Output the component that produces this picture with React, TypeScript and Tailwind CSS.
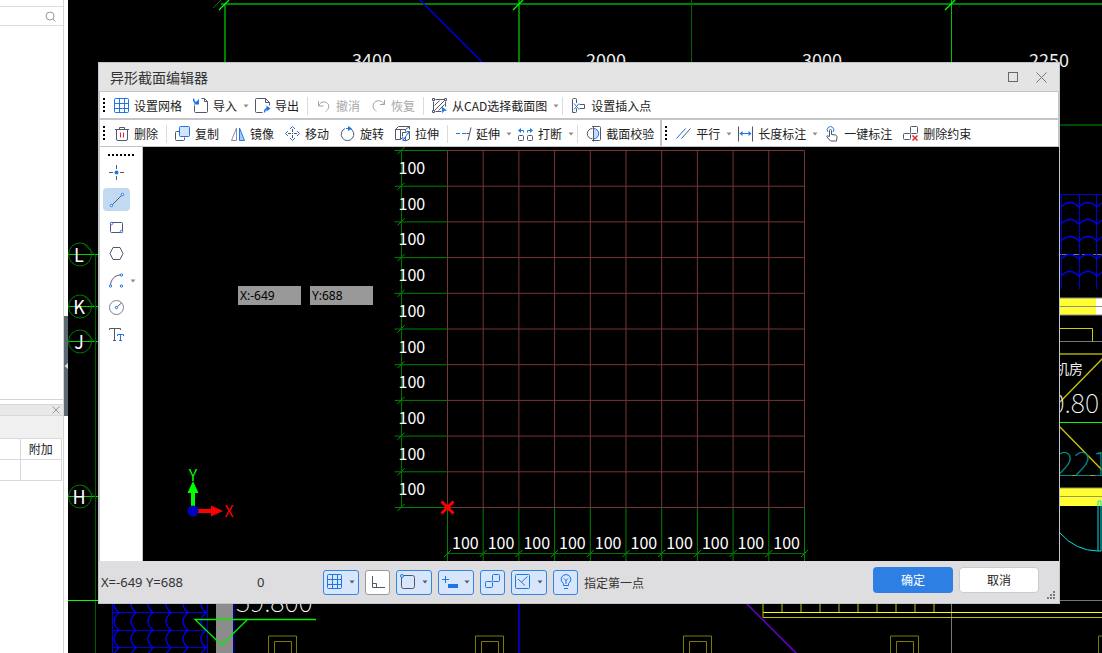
import React from "react";

type IconProps = {
  children: React.ReactNode;
  size?: number;
};

type ToolItem = {
  label: string;
  icon: React.ReactNode;
  menu?: boolean;
  disabled?: boolean;
  separated?: boolean;
};

const BLUE = "#1f74e8";
const DARK = "#50586c";
const CELL = 35.7;
const STEPS = [0, 1, 2, 3, 4, 5, 6, 7, 8, 9, 10];

const Icon: React.FC<IconProps> = ({ children, size = 16 }) => (
  <svg width={size} height={size} viewBox="0 0 16 16" fill="none" stroke={DARK} className="shrink-0">
    {children}
  </svg>
);

const Caret: React.FC<{ color?: string }> = ({ color = "#8c8c8c" }) => (
  <svg width="6" height="4" viewBox="0 0 6 4" className="shrink-0">
    <path d="M0.5 0.5h5L3 3.5z" fill={color} />
  </svg>
);

const GridIcon = () => (
  <Icon>
    <rect x="0.5" y="0.5" width="14" height="14" rx="1" stroke={BLUE} />
    <path d="M5.5 0.5v14M10.5 0.5v14M0.5 5.5h14M0.5 10.5h14" stroke={BLUE} />
  </Icon>
);

const TwoBoxes: React.FC<{ color?: string }> = ({ color = DARK }) => (
  <>
    <rect x="7.5" y="0.5" width="7" height="7" rx="1" stroke={color} />
    <rect x="0.5" y="7.5" width="7" height="6" rx="1" stroke={color} />
  </>
);

const fileTools: ToolItem[] = [
  { label: "设置网格", icon: <GridIcon /> },
  {
    label: "导入",
    menu: true,
    icon: (
      <Icon>
        <path d="M8.5 0.5h3l3 3v10a1 1 0 0 1-1 1h-11a1 1 0 0 1-1-1v-6M11.5 0.5v3h3" />
        <path d="M0.5 0.5c0 3 1 4.5 4 4.5" stroke={BLUE} strokeWidth="1.5" />
        <path d="M6 1v5.5H0.5z" fill={BLUE} stroke="none" />
      </Icon>
    ),
  },
  {
    label: "导出",
    separated: true,
    icon: (
      <Icon>
        <path d="M7.5 14.5h-6a1 1 0 0 1-1-1v-12a1 1 0 0 1 1-1h9l4 4v3M10.5 0.5v4h4" />
        <path d="M9.5 14.5c0-3 1-4 3.5-4" stroke={BLUE} strokeWidth="1.5" />
        <path d="M11.5 7.5l4 3-4 3z" fill={BLUE} stroke="none" />
      </Icon>
    ),
  },
  {
    label: "撤消",
    disabled: true,
    icon: (
      <Icon>
        <path
          d="M2.5 3v5H7.5M2.5 8c1-3 3.500-4.500 6.500-4 4 1 4.500 4.500 3 7-.5 1-1 1.500-2.500 2.500"
          stroke="#a3a3a3"
        />
      </Icon>
    ),
  },
  {
    label: "恢复",
    disabled: true,
    separated: true,
    icon: (
      <Icon>
        <path
          d="M13.5 2v4.500h-4.500M13 6.500c-1.500-3-4-4.500-7-3.500-3.500 1-4.500 4.500-3.500 7 .5 1.500 1.500 2.500 3 3"
          stroke="#a3a3a3"
        />
      </Icon>
    ),
  },
  {
    label: "从CAD选择截面图",
    menu: true,
    separated: true,
    icon: (
      <Icon>
        <path d="M3.5 1.5h9M1.5 3.5v9M13.5 3.5v5M3.5 13.5h6" />
        <path d="M0.5 0.5h2v2h-2zM12.5 0.5h2v2h-2zM0.5 12.5h2v2h-2z" />
        <path d="M2.5 7.5l5-5M2.5 12.5l10-10M6.5 12.5l6-6" />
        <path d="M9.5 8.5l5.5 4-3 .5-1.5 2.5z" fill={BLUE} stroke="none" />
      </Icon>
    ),
  },
  {
    label: "设置插入点",
    icon: (
      <Icon>
        <path d="M5.5 5v-3.5a1 1 0 0 0-1-1h-2a1 1 0 0 0-1 1v13h3a1 1 0 0 0 1-1v-3M8.500 6.500h5v4h-5" />
        <path d="M3 5.500l5 6M8 5.500l-5 6" stroke={BLUE} />
      </Icon>
    ),
  },
];

const editTools: ToolItem[] = [
  {
    label: "删除",
    separated: true,
    icon: (
      <Icon>
        <path d="M1 3.5h14M5.5 3.5v-2h5v2M2.5 3.5v9.5a1.5 1.5 0 0 0 1.5 1.5h8a1.5 1.5 0 0 0 1.5-1.5v-9.5" />
        <path d="M6.5 6.5v5M9.5 6.5v5" stroke="#e0262d" />
      </Icon>
    ),
  },
  {
    label: "复制",
    icon: (
      <Icon>
        <path d="M4 5.5h-2.5a1 1 0 0 0-1 1v7a1 1 0 0 0 1 1h7a1 1 0 0 0 1-1v-2" />
        <rect x="4.5" y="0.5" width="10" height="10" rx="1" fill="#d3e4fb" stroke={BLUE} />
      </Icon>
    ),
  },
  {
    label: "镜像",
    icon: (
      <Icon>
        <path d="M6.5 2v12.5h-5z" stroke="#8b90a0" />
        <path d="M9.5 2v12.5h5z" fill="#a9cbf8" stroke={BLUE} />
      </Icon>
    ),
  },
  {
    label: "移动",
    icon: (
      <Icon>
        <path d="M7.5 3v3M7.5 9v3M3 7.5h3M9 7.5h3M7.5 7v1" />
        <path d="M5 3l2.5-2.5L10 3M5 12l2.5 2.5L10 12M3 5L0.5 7.5 3 10M12 5l2.5 2.5L12 10" stroke={BLUE} />
      </Icon>
    ),
  },
  {
    label: "旋转",
    icon: (
      <Icon>
        <path d="M10 2.5a6.3 6.3 0 1 1-5 0" />
        <path d="M6 2.5h3.5" stroke={BLUE} />
        <path d="M8 0l4 2.5L8 5z" fill={BLUE} stroke="none" />
      </Icon>
    ),
  },
  {
    label: "拉伸",
    separated: true,
    icon: (
      <Icon>
        <path d="M0.5 3.5l3-3h11v3M0.5 3.5h10l4-3M0.5 3.5v10h5v-10M10.5 3.5v2M5.5 13.5l2-2" />
        <path d="M7.5 10.5v-4h4M14.5 5v8l-4 2v-4" />
        <path d="M8 14.5l6-9M8 11.5v3h3M11.5 5.5h2.5v3" stroke={BLUE} />
      </Icon>
    ),
  },
  {
    label: "延伸",
    menu: true,
    icon: (
      <Icon>
        <path d="M0 7.5h4M6 7.5h4" stroke={BLUE} />
        <path d="M10.5 7.5h3M15 1.5l-3 13" />
      </Icon>
    ),
  },
  {
    label: "打断",
    menu: true,
    separated: true,
    icon: (
      <Icon>
        <rect x="0.5" y="9.5" width="5" height="5" rx="1" />
        <rect x="9.5" y="9.5" width="5" height="5" rx="1" />
        <path d="M1 4.5h4.5v2M14 4.5H9.5v2" stroke={BLUE} />
        <path d="M0 4.5L3 2v5zM15 4.5L12 2v5z" fill={BLUE} stroke="none" />
      </Icon>
    ),
  },
  {
    label: "截面校验",
    icon: (
      <Icon>
        <path d="M6 0.5h7.5a1 1 0 0 1 1 1v12a1 1 0 0 1-1 1H6" />
        <path d="M7.5 2.5a5.2 5.2 0 0 1 0 10.4z" fill="#c5dcfa" stroke={BLUE} />
        <path d="M6.500 2.5a5.2 5.2 0 1 0 0 10.4M7.5 0v15.5" />
      </Icon>
    ),
  },
];

const constraintTools: ToolItem[] = [
  {
    label: "平行",
    menu: true,
    icon: (
      <Icon>
        <path d="M0.5 12.5l9-10" stroke={BLUE} />
        <path d="M5.5 12.5l9-10" />
      </Icon>
    ),
  },
  {
    label: "长度标注",
    menu: true,
    icon: (
      <Icon>
        <path d="M0.5 0.5v15M14.5 0.5v15" />
        <path d="M2 7.5h11" stroke={BLUE} />
        <path d="M1.5 7.5l3-2.5v5zM13.5 7.5l-3-2.5v5z" fill={BLUE} stroke="none" />
      </Icon>
    ),
  },
  {
    label: "一键标注",
    icon: (
      <Icon>
        <path d="M4 6a3.3 3.3 0 1 1 5 0" stroke={BLUE} />
        <path d="M5.5 10.5V4.5a1 1 0 0 1 2 0v4l4 .5c1 .2 1.5 1 1.5 2l-.5 4h-6l-3.5-4c-.5-1 .5-1.5 1-1z" />
      </Icon>
    ),
  },
  {
    label: "删除约束",
    icon: (
      <Icon>
        <TwoBoxes />
        <path d="M9 9h7v7H9z" fill="#fff" stroke="none" />
        <path d="M9.5 9.5l5 5M14.5 9.5l-5 5" stroke="#e0262d" strokeWidth="1.5" />
      </Icon>
    ),
  },
];

const drawTools: ToolItem[] = [
  {
    label: "点",
    icon: (
      <Icon>
        <path d="M7.5 0v4M7.5 11v4M0 7.5h4M11 7.5h4" />
        <circle cx="7.5" cy="7.5" r="2" fill={BLUE} stroke="none" />
      </Icon>
    ),
  },
  {
    label: "直线",
    icon: (
      <Icon>
        <path d="M3 13L13 3" />
        <circle cx="2.5" cy="13.5" r="1.2" fill="#fff" stroke={BLUE} />
        <circle cx="13.5" cy="2.5" r="1.2" fill="#fff" stroke={BLUE} />
      </Icon>
    ),
  },
  {
    label: "矩形",
    icon: (
      <Icon>
        <rect x="1.5" y="3.5" width="12" height="10" rx="1" />
        <circle cx="2.5" cy="4.5" r="1.2" fill="#fff" stroke={BLUE} />
        <circle cx="12.5" cy="12.5" r="1.2" fill="#fff" stroke={BLUE} />
      </Icon>
    ),
  },
  {
    label: "多边形",
    icon: (
      <Icon>
        <path d="M4 1.5h7l3 6-3 6H4l-3-6z" />
      </Icon>
    ),
  },
  {
    label: "弧",
    menu: true,
    icon: (
      <Icon>
        <path d="M1.5 12C2 7 5 2.500 11 2" />
        <circle cx="1.5" cy="13" r="1.2" stroke={BLUE} />
        <circle cx="12.5" cy="2" r="1.2" stroke={BLUE} />
        <circle cx="12.5" cy="13" r="1.2" stroke={BLUE} />
      </Icon>
    ),
  },
  {
    label: "圆",
    icon: (
      <Icon>
        <circle cx="7.5" cy="7.5" r="7" stroke="#7b8192" />
        <path d="M8.5 6.5L12.5 3" />
        <circle cx="7.5" cy="7.5" r="1.2" stroke={BLUE} />
      </Icon>
    ),
  },
  {
    label: "文字",
    icon: (
      <Icon>
        <path d="M0.5 3V1.5h11V3M5.5 1.5v12M4 13.5h3" />
        <path d="M8.5 9V7.5h6V9M11.5 7.5v6M10 13.5h3" stroke={BLUE} />
      </Icon>
    ),
  },
];

const statusTools: ToolItem[] = [
  { label: "网格", menu: true, icon: <GridIcon /> },
  {
    label: "正交",
    disabled: true,
    icon: (
      <Icon>
        <path d="M2.5 2v11.5H15M2.5 9.5h4v4" />
      </Icon>
    ),
  },
  {
    label: "捕捉",
    menu: true,
    icon: (
      <Icon>
        <rect x="1.5" y="1.5" width="13" height="13" rx="2" />
        <circle cx="2" cy="2" r="1.5" fill="#d7e6fb" stroke={BLUE} />
      </Icon>
    ),
  },
  {
    label: "动态输入",
    menu: true,
    icon: (
      <Icon>
        <path d="M3.5 2v7M0 5.5h7" stroke={BLUE} />
        <rect x="6" y="10" width="10" height="4" fill={BLUE} stroke="none" />
      </Icon>
    ),
  },
  {
    label: "约束",
    icon: (
      <Icon>
        <TwoBoxes color={BLUE} />
      </Icon>
    ),
  },
  {
    label: "检查",
    menu: true,
    icon: (
      <Icon>
        <rect x="0.5" y="0.5" width="14" height="14" rx="1" stroke={BLUE} />
        <path d="M3 5l7 6.5M6.5 8L12.5 2.5" stroke={BLUE} />
      </Icon>
    ),
  },
  {
    label: "提示",
    icon: (
      <Icon>
        <path
          d="M5.5 11.5V9.5A4.8 4.8 0 1 1 10.5 9.5v2zM6 14.5h4M8 6v4M6 4.5L8 6.5l2-2"
          stroke={BLUE}
        />
      </Icon>
    ),
  },
];

const Grip = () => (
  <div className="mr-0.5 mb-0.5 flex w-1 shrink-0 flex-col gap-0.5" aria-hidden="true">
    <i className="size-0.5 bg-black" />
    <i className="size-0.5 bg-black" />
    <i className="size-0.5 bg-black" />
    <i className="size-0.5 bg-black" />
  </div>
);

const ToolButtons: React.FC<{ items: ToolItem[] }> = ({ items }) => (
  <>
    {items.map((item) => (
      <React.Fragment key={item.label}>
        <button
          type="button"
          disabled={item.disabled}
          className={`flex h-6 shrink-0 items-center gap-1 pl-[5px] whitespace-nowrap ${
            item.menu ? "pr-px" : "pr-1.5"
          } ${item.disabled ? "text-[#a8a8a8]" : "text-[#222]"}`}
        >
          {item.icon}
          <span>{item.label}</span>
          {item.menu && (
            <span className="pl-0.5">
              <Caret />
            </span>
          )}
        </button>
        {item.separated && <div className="mr-[3px] ml-0.5 h-[18px] w-px shrink-0 bg-[#dcdcdc]" />}
      </React.Fragment>
    ))}
  </>
);

const AxisBubble: React.FC<{ y: number; name: string }> = ({ y, name }) => (
  <g fill="none">
    <path d={`M68 ${y}h30`} stroke="#00d000" />
    <circle cx="80" cy={y} r="11.5" stroke="#007800" />
    <path d={`M83 ${y - 11}l14 13`} stroke="#006000" />
    <text x="79" y={y + 7} textAnchor="middle" fontSize="18" fill="#fff">
      {name}
    </text>
  </g>
);

/* Plan drawing that lies behind the editor window */
const Drawing = () => (
  <svg className="absolute inset-0 size-full bg-black font-['Noto_Sans_CJK_SC',sans-serif]" fill="none">
    <path d="M221 4H3000M225 4v60M519 0v64" stroke="#008000" strokeWidth="2" />
    <path d="M691.5 0v64" stroke="#006400" />
    <path d="M951.5 0v64" stroke="#00c000" />
    <path d="M219 10l10-10M513 10l10-10M945 10l10-10" stroke="#00ff00" strokeWidth="1.3" />
    <path d="M213 8l8-8" stroke="#007000" />
    <path d="M420 0l64 64" stroke="#0000ff" strokeWidth="1.3" />
    <g fontSize="18" fill="#eee">
      <text x="352" y="67">3400</text>
      <text x="586" y="67">2000</text>
      <text x="802" y="67">3000</text>
      <text x="1029" y="67">2250</text>
    </g>

    <AxisBubble y={254.5} name="L" />
    <AxisBubble y={306.5} name="K" />
    <AxisBubble y={341.5} name="J" />
    <AxisBubble y={496.5} name="H" />
    <path d="M95.5 255v1000" stroke="#006000" />
    <path d="M68 600.5h32" stroke="#00ff00" />

    <path d="M1060 125h3000" stroke="#004a00" strokeWidth="2" />
    <path d="M1060 254.5h42" stroke="#777" strokeDasharray="9 2" />
    <path d="M1060 194.5h42M1061.5 194v95M1079.5 194v95M1096.5 194v95" stroke="#0000d8" />
    {[207, 224, 241, 259, 276].map((y) => (
      <path key={y} d={`M1061 ${y}q9-9 18 0q9-9 18 0l5-4`} stroke="#0000ff" strokeWidth="1.300" />
    ))}
    <path d="M1060 298h36v17h-36z" fill="#ffff33" />
    <path d="M1096 298h6v17h-6z" fill="#fff" />
    <path d="M1060 298h42M1060 306.5h42M1060 315h42" stroke="#8c8c8c" />
    <path d="M1060 341.5h42" stroke="#777" />
    <path d="M1060 328.5h32.5v13" stroke="#d0d000" />
    <path d="M1060 354h42" stroke="#808000" strokeWidth="2" />
    <text x="1055" y="374" fontSize="14" fill="#eee">
      机房
    </text>
    <path d="M1060 402l44-45M1060 427l44 45" stroke="#c8c800" strokeWidth="1.3" />
    <text x="1099" y="413" textAnchor="end" fontSize="27" fontWeight="100" fill="#fff">
      0.80
    </text>
    <path d="M1060 422.5h42" stroke="#00ff00" />
    <path d="M1060 475.5h42" stroke="#b0a800" />
    <text x="1056" y="476" fontSize="34" fontWeight="100" fill="#008c8c">
      221
    </text>
    <path d="M1060 488h42v18h-42z" fill="#ffff33" />
    <path d="M1060 488h42M1060 496.5h42" stroke="#9a9a50" />
    <path d="M1060 533q16 18 38 18v-50h3v50h-3" stroke="#00e0e0" />
    <path d="M1060 600.5h42M951.5 604v60" stroke="#777" />

    <path d="M763 612.5h340" stroke="#ffff00" />
    <path
      d="M763 604v13.5h340M782 604v8M801 604v8M820 604v8M839 604v8M858 604v8M877 604v8M896 604v8M915 604v8M934 604v8"
      stroke="#c0c000"
    />
    <path d="M746 603l52 52" stroke="#6a00d0" strokeWidth="1.5" />
    <path d="M519 604v60" stroke="#0000b0" strokeWidth="2" />
    {[268, 475, 683, 890, 1098].map((x) => (
      <g key={x} stroke="#7c7c00">
        <path d={`M${x + 0.5} 660v-24h28v24`} />
        <path d={`M${x + 6.5} 660v-18.5h17v18.5`} />
      </g>
    ))}

    <path d="M112.5 600v60M207.5 600v60M112 612.5h96M112 630.5h96M112 647.5h96" stroke="#0000d8" />
    {[119, 136, 153, 171, 188, 206].map((x) => (
      <path
        key={x}
        d={`M${x} 595q-10 9 0 17.5q-10 9 0 17.5q-10 9 0 17.5l-5 6`}
        stroke="#0000ff"
        strokeWidth="1.3"
      />
    ))}
    <path d="M216 600h17v60h-17z" fill="#8c8c8c" />
    <path d="M234 600v60" stroke="#0000e0" />
    <text x="236" y="612" fontSize="27" fontWeight="100" fill="#fff">
      59.800
    </text>
    <path d="M316 619.5H195l26.5 25.5L247 620" stroke="#00f000" strokeWidth="1.3" />
  </svg>
);

const SidePanel = () => (
  <aside className="relative flex w-[68px] shrink-0 bg-white text-xs text-[#222]">
    <div className="flex w-16 flex-col border-r border-[#d4d4d4]">
      <div className="h-[7px] border-b border-[#ddd]" />
      <div className="flex h-[19px] items-center justify-end border-b border-[#ddd] pr-[7px]">
        <svg width="11" height="11" viewBox="0 0 11 11" fill="none" stroke="#999">
          <circle cx="5" cy="5" r="4" />
          <path d="M8 8l2.5 2.5" />
        </svg>
      </div>
      <div className="h-[374px] border-b border-[#d4d4d4]" />
      <div className="mt-1 flex h-3 items-center justify-end border-y border-[#d8d8d8] bg-[#e8e8e8] pr-[3px]">
        <svg width="8" height="8" viewBox="0 0 8 8" stroke="#999">
          <path d="M0.5 0.5l7 7M7.5 0.5l-7 7" />
        </svg>
      </div>
      <div className="h-[22px] bg-[#f0f0f0]" />
      <table className="mr-px border-collapse">
        <tbody>
          <tr className="h-[21px]">
            <td className="w-5 border border-l-0 border-[#d8d8d8]" />
            <td className="border border-[#d8d8d8] p-0 text-center leading-5">附加</td>
          </tr>
          <tr className="h-[21px]">
            <td className="border border-l-0 border-[#d8d8d8]" />
            <td className="border border-[#d8d8d8]" />
          </tr>
        </tbody>
      </table>
    </div>
    <button type="button" aria-label="收起" className="mt-[316px] flex h-[100px] w-1 items-center bg-[#5c6872]">
      <svg width="4" height="6" viewBox="0 0 4 6">
        <path d="M4 0v6L0.5 3z" fill="#ddd" />
      </svg>
    </button>
  </aside>
);

const DrawToolbar = () => (
  <div className="flex w-11 shrink-0 flex-col items-start gap-1 border-r border-l border-[#c2c5ca] bg-white pt-[7px] pl-[3px]">
    <div className="mb-px ml-[5px] flex gap-0.5" aria-hidden="true">
      {[0, 1, 2, 3, 4, 5, 6].map((dot) => (
        <i key={dot} className="size-0.5 bg-black" />
      ))}
    </div>
    {drawTools.map((tool) => (
      <div key={tool.label} className="flex items-center">
        <button
          type="button"
          aria-label={tool.label}
          className={`flex h-[23px] w-[27px] items-center justify-center rounded ${
            tool.label === "直线" ? "bg-[#c2d9f2]" : ""
          }`}
        >
          {tool.icon}
        </button>
        {tool.menu && <Caret />}
      </div>
    ))}
  </div>
);

const SectionCanvas = () => (
  <div className="relative min-w-0 flex-1 overflow-hidden bg-black">
    <svg className="absolute inset-0 size-full font-['Noto_Sans_CJK_SC',sans-serif]" fill="none">
      {/* grid, with its top left corner as the origin */}
      <g transform="translate(304.5 3.5)">
        {STEPS.map((i) => (
          <g key={i}>
            <path d={`M${i * CELL} 0v357M0 ${i * CELL}h357`} stroke="#793438" />
            <path d={`M-53 ${i * CELL}h53M${i * CELL} 357v60`} stroke="#008000" />
            <path d={`M-50 ${i * CELL + 3.5}l7-7M${i * CELL - 3.5} 406.5l7-7`} stroke="#00a000" />
          </g>
        ))}
        <path d="M-46 0v357M0 403h357" stroke="#007000" />
        {STEPS.slice(0, 10).map((i) => (
          <g key={i} fontSize="16" fill="#fff">
            <text x="-49" y={i * CELL + 23.5}>
              100
            </text>
            <text x={i * CELL + 4.5} y="398.5">
              100
            </text>
          </g>
        ))}
        <path d="M-6 351l12 12M6 351l-12 12" stroke="#ff0000" strokeWidth="3" />
      </g>
      {/* axis marker */}
      <g transform="translate(50 364)">
        <path d="M0-5v-16" stroke="#00ff00" strokeWidth="4" />
        <path d="M-5.5-18L0-30l5.5 12z" fill="#00ff00" />
        <path d="M5 0h15" stroke="#ff0000" strokeWidth="4" />
        <path d="M18-5.500L30 0 18 5.5z" fill="#ff0000" />
        <circle r="5.5" fill="#0000c0" />
        <text x="0" y="-30" textAnchor="middle" fontSize="16" fill="#00ff00">
          Y
        </text>
        <text x="36" y="6" textAnchor="middle" fontSize="16" fill="#ff0000">
          X
        </text>
      </g>
    </svg>
    <div className="absolute top-[139px] left-[95px] flex gap-[9px]">
      <input
        aria-label="X"
        defaultValue="X:-649"
        className="h-[19px] w-[63px] bg-[#999] px-0.5 font-['Noto_Sans',sans-serif] text-xs text-black"
      />
      <input
        aria-label="Y"
        defaultValue="Y:688"
        className="h-[19px] w-[63px] bg-[#999] px-0.5 font-['Noto_Sans',sans-serif] text-xs text-black"
      />
    </div>
  </div>
);

const StatusBar = () => (
  <footer className="relative flex h-[42px] shrink-0 items-center bg-[#dedee0] pr-5 pl-0.5 text-xs text-[#333]">
    <span className="w-[156px] pt-0.5 font-['Noto_Sans',sans-serif] text-[13px]">X=-649 Y=688</span>
    <span className="w-[66px] pt-0.5 font-['Noto_Sans',sans-serif] text-[13px]">0</span>
    <div className="flex shrink-0 gap-1.5">
      {statusTools.map((tool) => (
        <button
          key={tool.label}
          type="button"
          aria-label={tool.label}
          className={`flex h-[25px] items-center rounded-[3px] border ${
            tool.menu ? "w-9 justify-between pr-[3px] pl-[3px]" : "w-[25px] justify-center"
          } ${tool.disabled ? "border-[#999] bg-white" : "border-[#3584e4] bg-[#d7e6fb]"}`}
        >
          {tool.icon}
          {tool.menu && <Caret color="#50586c" />}
        </button>
      ))}
    </div>
    <span className="ml-1.5 pt-0.5 whitespace-nowrap">指定第一点</span>
    <div className="mb-1 ml-auto flex gap-1.5">
      <button type="button" className="h-[26px] w-20 rounded bg-[#2d7fe3] text-white">
        确定
      </button>
      <button type="button" className="h-[26px] w-20 rounded border border-[#ccc] bg-white text-[#222]">
        取消
      </button>
    </div>
    <svg width="8" height="8" viewBox="0 0 8 8" fill="#777c84" className="absolute right-1 bottom-1">
      <path d="M6 0h2v2H6zM3 3h2v2H3zM6 3h2v2H6zM0 6h2v2H0zM3 6h2v2H3zM6 6h2v2H6z" />
    </svg>
  </footer>
);

const EditorWindow = () => (
  <section className="absolute top-[62px] right-[42px] bottom-[49px] left-[98px] flex flex-col border border-[#c2c5ca] bg-[#e4e4e5] text-xs">
    <header className="flex h-[29px] shrink-0 items-center border-b border-[#c2c5ca] pr-3 pl-[11px]">
      <h1 className="flex-1 text-sm text-[#333]">异形截面编辑器</h1>
      <button type="button" aria-label="最大化">
        <svg width="10" height="10" viewBox="0 0 10 10" fill="none" stroke="#666">
          <rect x="0.5" y="0.5" width="9" height="9" />
        </svg>
      </button>
      <button type="button" aria-label="关闭" className="ml-[18px]">
        <svg width="11" height="11" viewBox="0 0 11 11" fill="none" stroke="#777">
          <path d="M0.5 0.5l10 10M10.5 0.5l-10 10" />
        </svg>
      </button>
    </header>
    <nav className="flex h-7 shrink-0 items-center border-x border-b-2 border-[#c2c5ca] bg-white pt-0.5 pl-[3px]">
      <Grip />
      <ToolButtons items={fileTools} />
    </nav>
    <nav className="flex h-[27px] shrink-0 items-stretch border-x border-b border-[#c2c5ca] bg-white pl-[3px]">
      <div className="flex items-center pt-0.5">
        <Grip />
        <ToolButtons items={editTools} />
      </div>
      <div className="flex items-center border-l-2 border-[#c2c5ca] pt-0.5 pl-[3px]">
        <Grip />
        <ToolButtons items={constraintTools} />
      </div>
    </nav>
    <div className="flex min-h-0 flex-1">
      <DrawToolbar />
      <SectionCanvas />
    </div>
    <StatusBar />
  </section>
);

export default function App() {
  return (
    <main className="relative flex min-h-screen overflow-hidden font-['Noto_Sans_CJK_SC',sans-serif]">
      <Drawing />
      <SidePanel />
      <EditorWindow />
    </main>
  );
}
